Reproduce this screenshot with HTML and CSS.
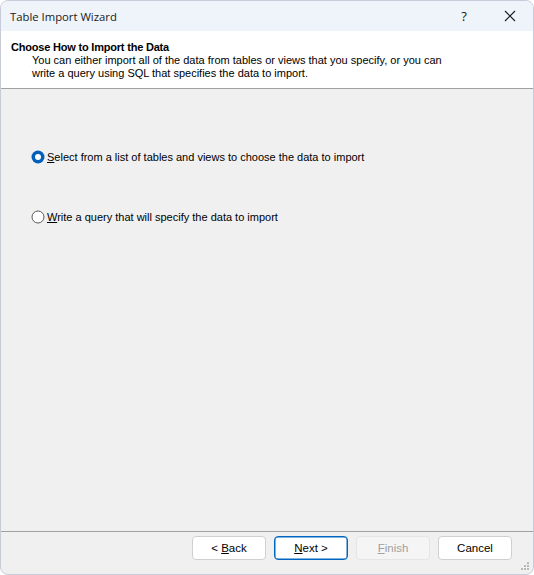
FILE: index.html
```html
<!DOCTYPE html>
<html>
<head>
<meta charset="utf-8">
<link rel="stylesheet" href="styles.css">
</head>
<body>
<div class="window">
  <div class="titlebar">
    <span class="title">Table Import Wizard</span>
    <span class="tb-help">?</span>
    <span class="tb-close">
      <svg width="12" height="12" viewBox="0 0 12 12"><path d="M1 1L11 11M11 1L1 11" stroke="#1a1a1a" stroke-width="1.1" fill="none"/></svg>
    </span>
  </div>
  <div class="header">
    <div class="h-title">Choose How to Import the Data</div>
    <div class="h-desc">You can either import all of the data from tables or views that you specify, or you can<br>write a query using SQL that specifies the data to import.</div>
  </div>
  <div class="content">
    <div class="radio-row first">
      <svg class="radio" width="14" height="14" viewBox="0 0 14 14"><circle cx="7" cy="7" r="6.5" fill="#005fb8"/><circle cx="7" cy="7" r="3" fill="#fff"/></svg>
      <span class="label"><u>S</u>elect from a list of tables and views to choose the data to import</span>
    </div>
    <div class="radio-row second">
      <svg class="radio" width="14" height="14" viewBox="0 0 14 14"><circle cx="7" cy="7" r="6" fill="#fff" stroke="#5a5a5a" stroke-width="1"/></svg>
      <span class="label"><u>W</u>rite a query that will specify the data to import</span>
    </div>
  </div>
  <div class="footer">
    <button class="btn">&lt; <u>B</u>ack</button>
    <button class="btn default"><u>N</u>ext &gt;</button>
    <button class="btn disabled"><u>F</u>inish</button>
    <button class="btn">Cancel</button>
    <svg class="grip" width="10" height="10" viewBox="0 0 10 10">
      <rect x="7" y="1" width="2" height="2" fill="#b8b8b8"/>
      <rect x="4" y="4" width="2" height="2" fill="#b8b8b8"/>
      <rect x="7" y="4" width="2" height="2" fill="#b8b8b8"/>
      <rect x="1" y="7" width="2" height="2" fill="#b8b8b8"/>
      <rect x="4" y="7" width="2" height="2" fill="#b8b8b8"/>
      <rect x="7" y="7" width="2" height="2" fill="#b8b8b8"/>
    </svg>
  </div>
</div>
</body>
</html>
```
FILE: styles.css
```css
html, body {
  margin: 0;
  padding: 0;
  background: #ffffff;
}
.window {
  width: 534px;
  height: 575px;
  box-sizing: border-box;
  border: 1px solid #c8ccd8;
  border-radius: 8px;
  overflow: hidden;
  background: #f0f0f0;
  display: flex;
  flex-direction: column;
  font-family: "Liberation Sans", Arial, sans-serif;
  color: #000;
  position: relative;
}
.titlebar {
  height: 30px;
  background: #eef4f9;
  display: flex;
  align-items: center;
  flex-shrink: 0;
}
.title {
  font-family: "Open Sans", "Noto Sans", sans-serif;
  font-size: 11.3px;
  color: #1a1a1a;
  padding-left: 9px;
  flex: 1;
}
.tb-help {
  font-family: "Open Sans", sans-serif;
  font-size: 13px;
  color: #1a1a1a;
  width: 46px;
  text-align: center;
}
.tb-close {
  width: 46px;
  height: 30px;
  display: flex;
  align-items: center;
  justify-content: center;
}
.header {
  height: 58px;
  background: #ffffff;
  border-bottom: 1px solid #a0a0a0;
  box-sizing: border-box;
  padding: 9px 0 0 10px;
  flex-shrink: 0;
}
.h-title {
  font-weight: bold;
  font-size: 11px;
  letter-spacing: -0.2px;
  line-height: 14px;
}
.h-desc {
  font-size: 11px;
  line-height: 13px;
  padding-left: 21px;
  color: #000;
}
.content {
  flex: 1;
  padding-left: 30px;
  display: flex;
  flex-direction: column;
}
.radio-row {
  display: flex;
  align-items: center;
  height: 16px;
}
.radio-row.first {
  margin-top: 60px;
}
.radio-row.second {
  margin-top: 44px;
}
.radio {
  flex-shrink: 0;
  margin-right: 2px;
}
.label {
  font-size: 11px;
}
.footer {
  height: 43px;
  box-sizing: border-box;
  border-top: 1px solid #a0a0a0;
  display: flex;
  justify-content: flex-end;
  align-items: flex-start;
  padding: 4px 21px 0 0;
  gap: 8px;
  flex-shrink: 0;
  position: relative;
}
.btn {
  width: 74px;
  height: 24px;
  box-sizing: border-box;
  background: #ffffff;
  border: 1px solid #d0d0d0;
  border-radius: 4px;
  font-family: "Liberation Sans", Arial, sans-serif;
  font-size: 11.5px;
  color: #000;
  padding: 0;
}
.btn.default {
  border: 1px solid #0067c0;
  box-shadow: inset 0 0 0 0.5px #0067c0;
}
.btn.disabled {
  background: #f5f5f5;
  border-color: #e5e5e5;
  color: #a0a0a0;
}
.grip {
  position: absolute;
  right: 3px;
  bottom: 3px;
}
```
